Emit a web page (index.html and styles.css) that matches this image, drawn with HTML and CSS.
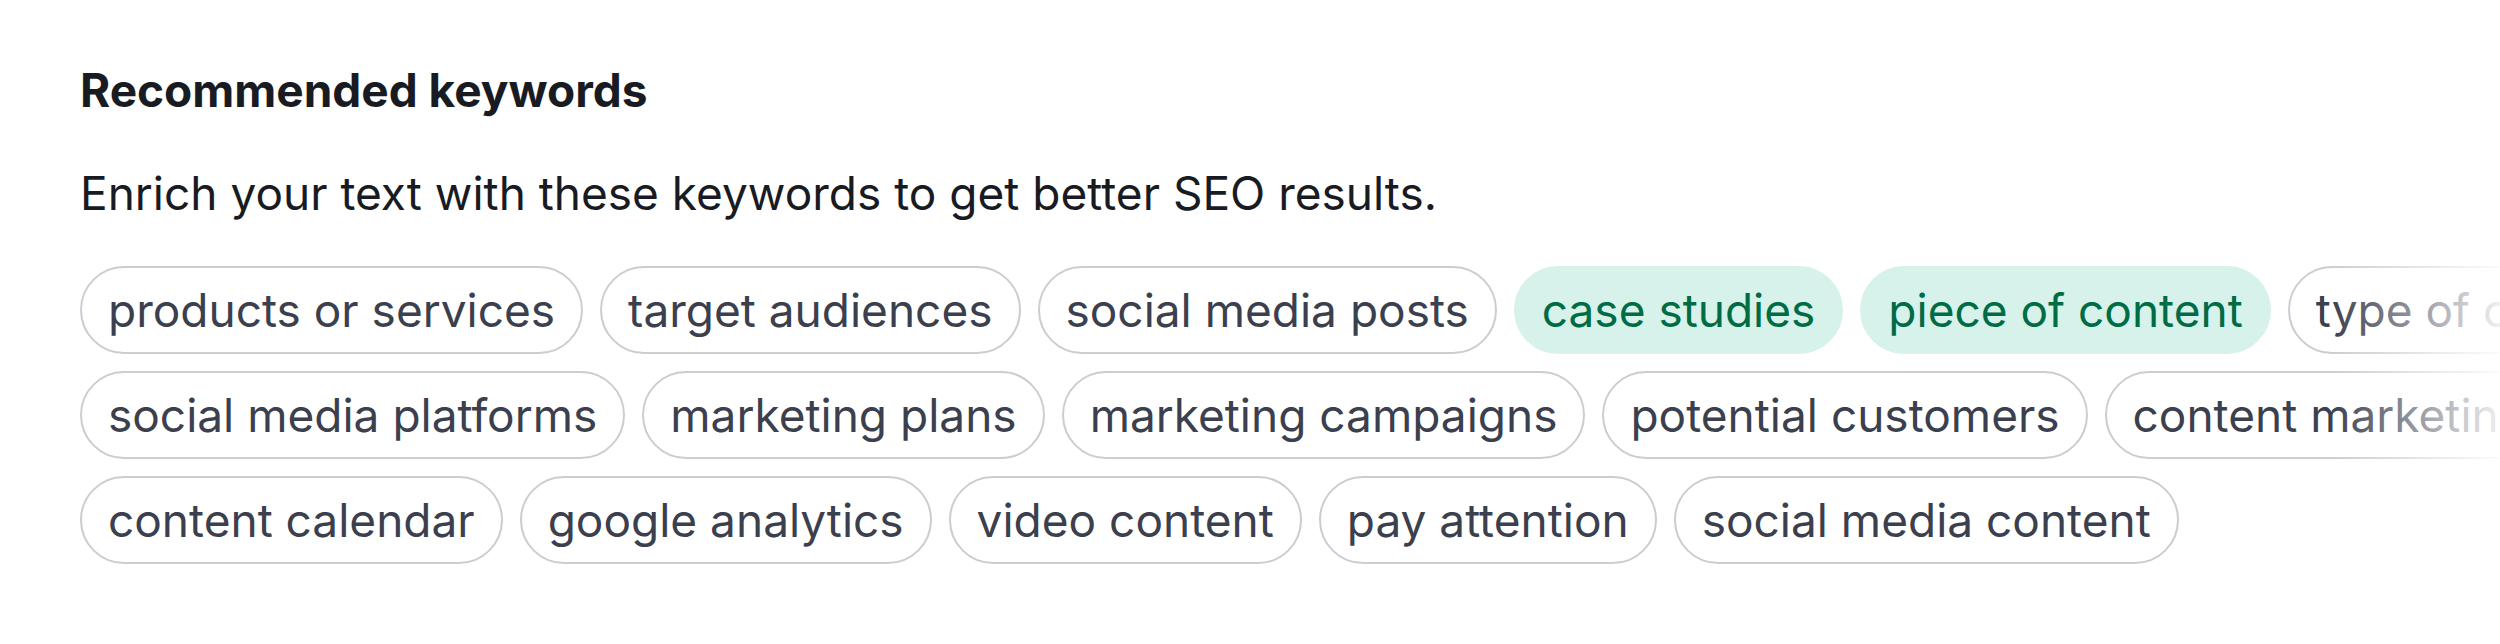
FILE: index.html
```html
<!DOCTYPE html>
<html lang="en">
<head>
<meta charset="utf-8">
<title>Recommended keywords</title>
<link rel="stylesheet" href="styles.css">
</head>
<body>
<section class="panel">
  <h2 class="title">Recommended keywords</h2>
  <p class="subtitle">Enrich your text with these keywords to get better SEO results.</p>
  <div class="tags">
    <div class="row">
      <span class="tag">products or services</span>
      <span class="tag">target audiences</span>
      <span class="tag">social media posts</span>
      <span class="tag tag-used">case studies</span>
      <span class="tag tag-used">piece of content</span>
      <span class="tag">type of content</span>
    </div>
    <div class="row">
      <span class="tag">social media platforms</span>
      <span class="tag">marketing plans</span>
      <span class="tag">marketing campaigns</span>
      <span class="tag">potential customers</span>
      <span class="tag">content marketing</span>
    </div>
    <div class="row">
      <span class="tag">content calendar</span>
      <span class="tag">google analytics</span>
      <span class="tag">video content</span>
      <span class="tag">pay attention</span>
      <span class="tag">social media content</span>
    </div>
    <div class="fade"></div>
  </div>
</section>
</body>
</html>
```
FILE: styles.css
```css
html, body {
  margin: 0;
  padding: 0;
  background: #ffffff;
}

body {
  font-family: Inter, "Noto Sans", "Liberation Sans", sans-serif;
  color: #191b23;
  width: 2500px;
  height: 644px;
  overflow: hidden;
}

.panel {
  padding: 62px 0 0 80px;
}

.title {
  margin: 0;
  font-size: 46px;
  line-height: 56px;
  font-weight: 700;
  color: #191b23;
}

.subtitle {
  margin: 47px 0 0;
  font-size: 46px;
  line-height: 56px;
  font-weight: 400;
  color: #191b23;
}

.tags {
  position: relative;
  margin-top: 45px;
  display: flex;
  flex-direction: column;
  gap: 17px;
  overflow: hidden;
}

.row {
  display: flex;
  flex-wrap: nowrap;
  gap: 17px;
}

.tag {
  flex: none;
  box-sizing: border-box;
  height: 88px;
  display: inline-flex;
  align-items: center;
  padding: 0 26px;
  border: 2.5px solid #cbcdd3;
  border-radius: 44px;
  font-size: 46px;
  color: #3b3f4e;
  white-space: nowrap;
  background: #ffffff;
}

.tag-used {
  border-color: #d6f2ea;
  background: #d6f2ea;
  color: #006c46;
}

.fade {
  position: absolute;
  top: 0;
  right: 0;
  bottom: 0;
  width: 170px;
  background: linear-gradient(to right, rgba(255,255,255,0), rgba(255,255,255,0.92));
}
```
